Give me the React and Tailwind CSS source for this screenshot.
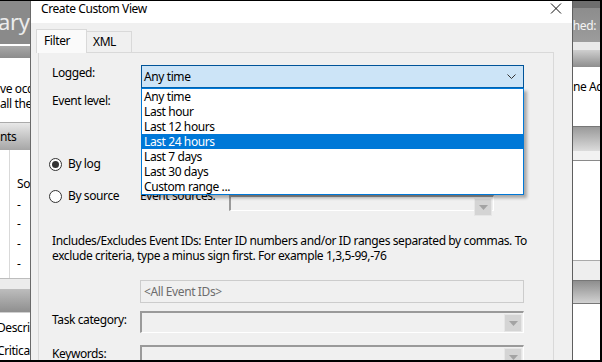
import React from "react";

const font = { fontFamily: '"Noto Sans", "Segoe UI", sans-serif', letterSpacing: "-0.4px" };

const times = [
  "Any time",
  "Last hour",
  "Last 12 hours",
  "Last 24 hours",
  "Last 7 days",
  "Last 30 days",
  "Custom range ...",
];

// classic sunken disabled combo (task category, keywords, event sources)
const SunkenCombo = ({ className = "" }) => (
  <div className={"flex shrink-0 items-start justify-end border-t-2 border-l-2 border-t-[#9a9a9a] border-l-[#9a9a9a] border-b border-r border-b-white border-r-white bg-[#f0f0f0] " + className}>
    <div className="mt-[1px] mr-[1px] flex h-[18px] w-[18px] items-center justify-center border border-[#e6e6e6] bg-[#d4d4d4]">
      <svg width="9" height="5" viewBox="0 0 9 5">
        <path d="M0 0 H9 L4.5 5 Z" fill="#a3a3a3" />
      </svg>
    </div>
  </div>
);

const Radio = ({ checked }) => (
  <div className="flex h-[13px] w-[13px] shrink-0 items-center justify-center rounded-full border border-[#333] bg-white">
    {checked && <div className="h-[7px] w-[7px] rounded-full bg-[#333]" />}
  </div>
);

const LeftBackground = () => (
  <div className="flex w-[30px] shrink-0 flex-col overflow-hidden bg-white text-[12px] leading-[15px] text-black">
    <div className="flex h-[43px] shrink-0 items-center bg-[#8a8a8a] pb-[2px]">
      <span className="-ml-[2px] text-[22px] text-[#ececec]">ary</span>
    </div>
    <div className="h-[2px] shrink-0 bg-white" />
    <div className="h-[12px] shrink-0 bg-gradient-to-b from-[#a8a8a8] to-[#8c8c8c]" />
    <div className="mt-[23px] shrink-0 whitespace-nowrap">ve occ</div>
    <div className="shrink-0 whitespace-nowrap">all the</div>
    <div className="mt-[11px] h-[1px] shrink-0 bg-[#aaaaaa]" />
    <div className="flex h-[27px] shrink-0 items-center bg-gradient-to-b from-[#e8e8e8] to-[#a6a6a6] whitespace-nowrap">nts</div>
    <div className="ml-[9px] flex h-[128px] shrink-0 border-l border-[#d9d9d9]">
      <div className="flex flex-col pl-[7px]">
        <div className="mt-[26px] whitespace-nowrap">So</div>
        <div className="mt-[6px]">-</div>
        <div className="mt-[4px]">-</div>
        <div className="mt-[5px]">-</div>
        <div className="mt-[5px]">-</div>
      </div>
    </div>
    <div className="h-[1px] shrink-0 bg-[#bdbdbd]" />
    <div className="h-[10px] shrink-0 bg-[#ececec]" />
    <div className="h-[23px] shrink-0 bg-gradient-to-b from-[#bdbdbd] to-[#8f8f8f]" />
    <div className="h-[1px] shrink-0 bg-[#cfcfcf]" />
    <div className="-ml-[3px] mt-[7px] shrink-0 whitespace-nowrap">Descri</div>
    <div className="-ml-[3px] mt-[8px] shrink-0 whitespace-nowrap">Critica</div>
  </div>
);

const RightBackground = () => (
  <div className="flex w-[28px] shrink-0 flex-col overflow-hidden border-l border-[#5f5f5f] bg-white text-[12px] leading-[15px] text-black">
    <div className="h-[7px] shrink-0 bg-[#6e6e6e]" />
    <div className="-ml-[3px] flex h-[34px] shrink-0 items-center bg-gradient-to-b from-[#8d8d8d] to-[#9c9c9c] whitespace-nowrap text-[#f4f4f4]">:hed:</div>
    <div className="h-[8px] shrink-0 bg-[#e9e9e9]" />
    <div className="h-[17px] shrink-0 bg-gradient-to-b from-[#cfcfcf] to-[#8e8e8e]" />
    <div className="mt-[12px] shrink-0 whitespace-nowrap">ne Adr</div>
    <div className="mt-[32px] h-[1px] shrink-0 bg-[#777]" />
    <div className="h-[24px] shrink-0 bg-gradient-to-b from-[#9a9a9a] to-[#dcdcdc]" />
    <div className="h-[9px] shrink-0 bg-[#f2f2f2]" />
    <div className="h-[1px] shrink-0 bg-[#8a8a8a]" />
    <div className="h-[99px] shrink-0" />
    <div className="h-[1px] shrink-0 bg-[#aaaaaa]" />
    <div className="h-[19px] shrink-0 bg-[#eeeeee]" />
    <div className="h-[1px] shrink-0 bg-[#777]" />
    <div className="h-[22px] shrink-0 bg-gradient-to-b from-[#8e8e8e] to-[#d2d2d2]" />
    <div className="h-[1px] shrink-0 bg-[#777]" />
    <div className="flex-1" />
  </div>
);

const App = () => {
  return (
    <div
      className="flex h-[362px] w-[602px] overflow-hidden border-t border-r-2 border-b-2 border-black bg-white"
      style={font}
    >
      <LeftBackground />

      {/* dialog */}
      <div className="flex w-[542px] shrink-0 flex-col overflow-hidden border-l border-[#6a6a6a] bg-[#f0f0f0] text-[12px] leading-[16px] text-black">
        {/* title bar */}
        <div className="flex h-[22px] shrink-0 items-start justify-between bg-white">
          <div className="ml-[10px]">Create Custom View</div>
          <svg className="mr-[10px] mt-[2px]" width="12" height="11" viewBox="0 0 12 11">
            <path d="M1 0.5 L11 10.5 M11 0.5 L1 10.5" stroke="#111" strokeWidth="1" />
          </svg>
        </div>

        {/* tabs */}
        <div className="ml-[5px] mt-[6px] flex shrink-0 items-end">
          <div className="relative z-10 -mb-[1px] flex h-[24px] w-[51px] items-start border border-b-0 border-[#d9d9d9] bg-[#fafafa] pl-[7px] pt-[3px]">
            Filter
          </div>
          <div className="flex h-[21px] w-[45px] items-start border border-b-0 border-l-0 border-[#d9d9d9] bg-[#f0f0f0] pl-[6px] pt-[2px]">
            XML
          </div>
        </div>

        {/* tab panel */}
        <div className="ml-[7px] flex w-[516px] flex-1 flex-col border border-[#d9d9d9] pl-[13px]">
          {/* Logged */}
          <div className="mt-[12px] flex shrink-0 items-start">
            <div className="w-[89px]">Logged:</div>
            <div className="relative z-20">
              <div className="flex h-[24px] w-[383px] items-center justify-between border border-b-2 border-[#005499] border-b-[#0063b1] bg-[#cce4f7] pl-[2px] pr-[7px]">
                <span>Any time</span>
                <svg width="9" height="5" viewBox="0 0 9 5">
                  <path d="M0.5 0.5 L4.5 4.5 L8.5 0.5" fill="none" stroke="#333" strokeWidth="1" />
                </svg>
              </div>
              <div className="absolute left-0 top-[23px] flex w-[383px] flex-col border border-[#0078d7] bg-white shadow-[3px_3px_3px_rgba(0,0,0,0.3)]">
                {times.map((t, i) => (
                  <div
                    key={t}
                    className={
                      "h-[15px] pl-[2px] leading-[15px] " +
                      (i === 3 ? "bg-[#0078d7] text-white" : "text-black")
                    }
                  >
                    {t}
                  </div>
                ))}
              </div>
            </div>
          </div>

          {/* Event level */}
          <div className="mt-[4px] h-[16px] shrink-0">Event level:</div>

          {/* By log */}
          <div className="-ml-[3px] mt-[47px] flex h-[16px] shrink-0 items-center gap-[6px]">
            <Radio checked />
            <span>By log</span>
          </div>

          {/* By source */}
          <div className="-ml-[3px] mt-[16px] flex h-[22px] shrink-0 items-start">
            <div className="flex h-[16px] w-[91px] items-center gap-[6px]">
              <Radio />
              <span>By source</span>
            </div>
            <div className="w-[89px]">Event sources:</div>
            <SunkenCombo className="mt-[7px] h-[16px] w-[265px]" />
          </div>

          {/* description */}
          <div className="mt-[23px] w-[480px] shrink-0 leading-[15px]">
            Includes/Excludes Event IDs: Enter ID numbers and/or ID ranges separated by commas. To exclude criteria, type a minus sign first. For example 1,3,5-99,-76
          </div>

          {/* All Event IDs */}
          <div className="ml-[88px] mt-[17px] flex h-[23px] w-[384px] shrink-0 items-center border border-[#cccccc] bg-[#f0f0f0] pl-[3px] text-[#6d6d6d]">
            &lt;All Event IDs&gt;
          </div>

          {/* Task category */}
          <div className="mt-[8px] flex shrink-0 items-start">
            <div className="w-[88px] pt-[1px]">Task category:</div>
            <SunkenCombo className="h-[22px] w-[384px]" />
          </div>

          {/* Keywords */}
          <div className="mt-[12px] flex shrink-0 items-start">
            <div className="w-[88px] pt-[1px]">Keywords:</div>
            <SunkenCombo className="h-[22px] w-[384px]" />
          </div>
        </div>
      </div>

      <RightBackground />
    </div>
  );
};

export default App;
